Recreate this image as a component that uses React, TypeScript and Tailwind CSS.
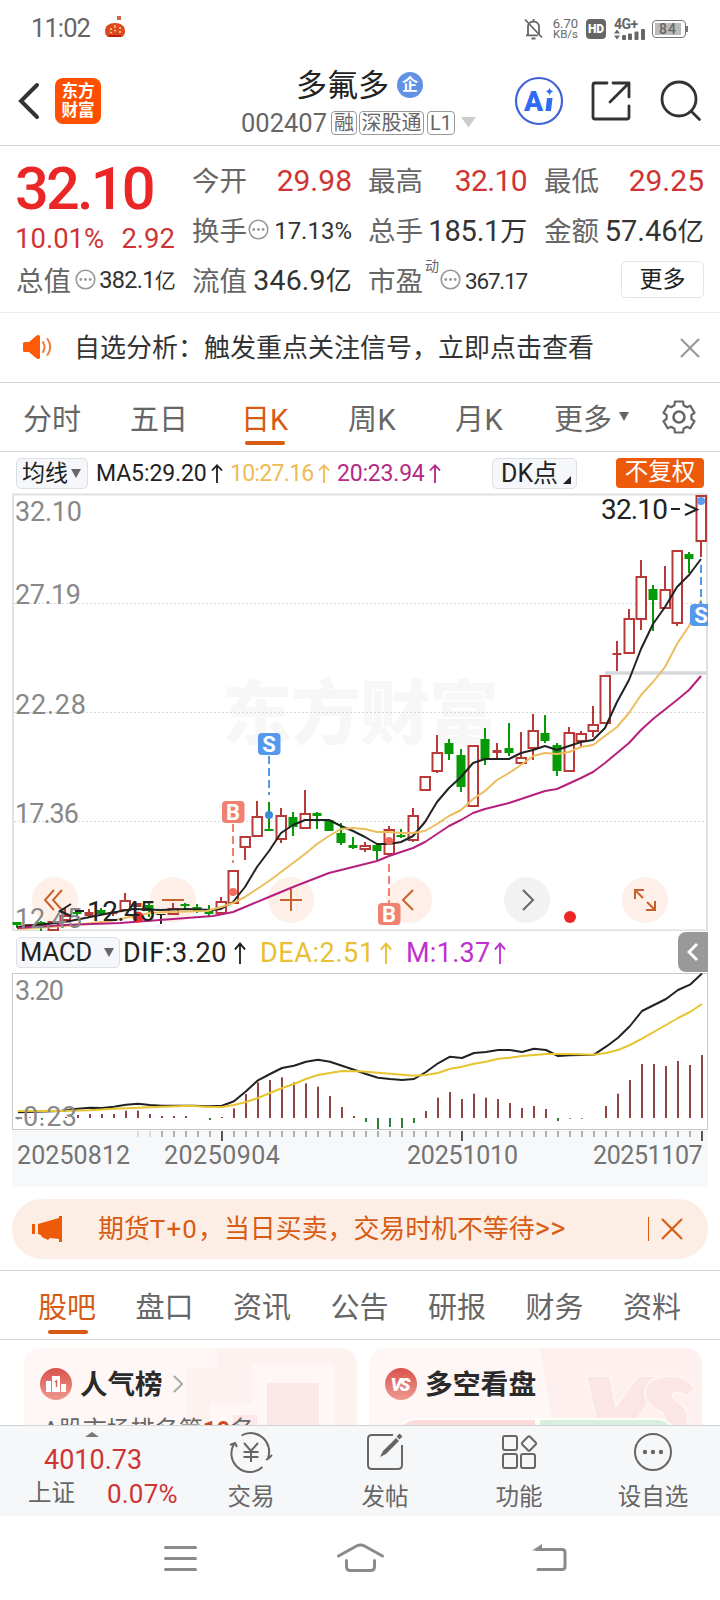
import React from 'react';
import clsx from 'clsx';

type Candle = {
  kind: 'up' | 'down' | 'flat';
  open: number;
  close: number;
  high: number;
  low: number;
};

// [kind, body top, body bottom, wick top, wick bottom]
const RAW_CANDLES: [string, number, number, number, number][] = [
  ['d', 922, 925, 922, 928], ['f', 924, 927, 924, 927], ['d', 922, 926, 921, 931], ['u', 921, 930, 921, 930],
  ['u', 915, 920, 908, 920], ['d', 912, 914, 909, 917], ['f', 912, 916, 909, 917], ['d', 910, 914, 908, 915],
  ['f', 912, 914, 909, 916], ['u', 900, 910, 893, 911], ['f', 903, 907, 903, 907], ['d', 905, 911, 903, 917],
  ['k', 914, 915, 914, 924], ['u', 908, 914, 903, 914], ['d', 904, 906, 903, 910], ['d', 907, 911, 904, 913],
  ['d', 910, 914, 905, 916], ['u', 901, 913, 897, 913], ['u', 870, 903, 870, 903], ['u', 836, 847, 836, 860],
  ['u', 816, 836, 801, 836], ['d', 829, 831, 802, 831], ['u', 815, 839, 808, 843], ['d', 817, 827, 812, 836],
  ['u', 813, 828, 790, 828], ['d', 813, 816, 812, 829], ['d', 820, 831, 820, 831], ['d', 833, 843, 823, 845],
  ['d', 845, 848, 837, 849], ['u', 845, 849, 842, 852], ['d', 845, 851, 843, 860], ['u', 829, 854, 826, 854],
  ['d', 835, 837, 829, 838], ['u', 815, 840, 808, 842], ['u', 776, 790, 776, 790], ['u', 752, 771, 735, 773],
  ['d', 743, 754, 739, 760], ['d', 755, 787, 749, 792], ['u', 745, 806, 745, 806], ['d', 739, 759, 728, 765],
  ['f', 750, 753, 743, 758], ['d', 748, 753, 723, 756], ['u', 757, 763, 732, 763], ['u', 730, 748, 714, 760],
  ['d', 733, 741, 715, 743], ['d', 745, 771, 743, 776], ['u', 732, 771, 727, 771], ['u', 733, 741, 731, 747],
  ['u', 724, 731, 706, 737], ['u', 675, 723, 675, 723], ['f', 653, 655, 641, 671], ['u', 618, 653, 609, 653],
  ['u', 576, 619, 560, 630], ['d', 589, 600, 585, 631], ['u', 589, 608, 566, 608], ['u', 550, 623, 550, 626],
  ['d', 554, 559, 552, 573], ['u', 495, 541, 495, 557],
];

const MACD_BARS = [
  -4, 2, -5, -2, 3, 9, 12, 12, 12, 22, 22, 12, 6, 6, 6, 0, -6, 3, 29, 72, 107, 114, 122, 107, 104, 94, 66, 33, 6,
  -12, -33, -27, -30, -15, 21, 61, 78, 57, 73, 61, 57, 45, 30, 36, 27, -9, -2, -2, 0, 36, 73, 114, 162, 162, 156,
  171, 159, 189,
];

const MA5 =
  '17,927 65,922 90,917 110,913 133,909 161,910 187,909 213,910 221,909 233,902 245,887 257,867 269,851 281,833 293,825 305,820 317,820 329,820 341,826 353,831 365,837 377,844 389,844 401,842 413,836 425,822 437,802 449,788 461,777 473,763 485,759 509,759 521,753 533,750 545,746 557,750 569,746 581,742 593,740 605,728 617,702 629,680 641,649 653,624 665,607 677,587 689,575 701,559';
const MA10 =
  '17,929 65,926 110,921 150,913 167,912 207,911 221,907 233,903 245,897 257,889 269,881 281,872 293,863 305,854 317,844 329,836 341,829 353,828 365,829 377,832 389,832 401,833 413,833 425,831 437,824 449,816 461,810 473,799 485,791 497,780 509,773 521,765 533,756 545,753 557,754 569,752 581,747 593,745 605,736 617,727 629,713 641,695 653,682 665,667 677,644 689,626 701,600';
const MA20 =
  '17,928 65,925 120,923 173,919 213,916 233,912 245,907 269,897 293,887 329,873 353,867 377,861 389,856 413,848 425,842 449,826 461,820 473,813 485,809 509,803 521,799 533,795 545,791 557,789 581,778 593,772 605,763 629,743 641,730 653,719 677,700 689,690 701,676';

const DIF =
  '18,1112.3 60,1111 75,1109 90,1107.7 102,1108 114,1106.7 126,1104.7 138,1103.7 150,1105 162,1105.7 193,1105.7 210,1106.3 222,1105.7 234,1101.3 246,1091.3 258,1080.3 270,1074 282,1068 294,1065.7 306,1061.7 318,1059.7 330,1061.7 342,1065.7 354,1069.7 366,1074 378,1077.7 390,1079 402,1080 414,1079 426,1072 438,1063.3 450,1056.7 462,1058 474,1053 486,1052 498,1050 510,1050 522,1052 534,1048.7 546,1050 558,1056 570,1055.3 594,1054.7 606,1046.7 618,1037.7 630,1026 642,1011 654,1005 666,999 678,990 690,984.7 702,973.5';
const DEA =
  '18,1111 60,1111 90,1110.3 114,1108.7 150,1107.3 190,1105.7 210,1107 222,1107 234,1105 246,1102 258,1098 270,1093 282,1088 294,1084 306,1079 318,1075 330,1073 342,1071 360,1071.3 390,1073.7 414,1075.7 426,1075 438,1073 450,1068.7 462,1066.7 474,1063.7 486,1061.7 498,1058.7 510,1057.7 522,1056 534,1055 546,1054 570,1054 594,1054.7 606,1053 618,1050 630,1045 642,1038.7 666,1025 678,1018 690,1012 702,1004';

const candles: Candle[] = RAW_CANDLES.map(([kind, open, close, high, low]) => ({
  kind: kind === 'u' ? 'up' : kind === 'd' ? 'down' : 'flat',
  open,
  close,
  high,
  low,
}));

const gearPath = (() => {
  const pts: string[] = [];
  for (let i = 0; i < 6; i++) {
    const a = -90 + i * 60;
    for (const [r, d] of [[12.6, -21], [16, -15], [16, 15], [12.6, 21]]) {
      const t = ((a + d) * Math.PI) / 180;
      pts.push(`${(17 + r * Math.cos(t)).toFixed(1)},${(17 + r * Math.sin(t)).toFixed(1)}`);
    }
  }
  return `M${pts.join('L')}Z`;
})();

function StatusBar() {
  return (
    <div className="flex h-[57px] shrink-0 items-center pl-[31px] pt-[1px] text-[#666]">
      <span className="w-[73px] text-[25.500px] leading-none tracking-[-0.900px]">11:02</span>
      <svg className="mb-1" width="22" height="22" viewBox="0 0 22 22">
        <rect x="13" y="0" width="4" height="4" fill="#c4674a" />
        <path d="M1 15c0-5 4-8 10-8s10 3 10 8c0 3-1 5-3 6H4c-2-1-3-3-3-6z" fill="#dd4a1c" />
        <path d="M5 19h12v2H5z" fill="#c11a10" />
        <path d="M6 13h2M11 9v3M15 12h2M6 16l2 1M10 14l2 1M15 16h2" stroke="#ffd9b0" strokeWidth="1.3" />
      </svg>
      <svg className="ml-[398px]" width="20" height="22" viewBox="0 0 20 22" fill="none" stroke="#666" strokeWidth="1.800">
        <path d="M4 17V9c0-3 2-5.500 5.500-5.500S15 6 15 9v8M2 17.300h12M9.500 1v2M7.500 20.500h4M1 1.500l17 18" />
      </svg>
      <div className="ml-[5px] mr-[4px] w-[33px] text-center text-[13px] leading-[11px]">
        <div>6.70</div>
        <div className="text-[11.500px]">KB/s</div>
      </div>
      <div className="flex h-5 w-5 items-center justify-center rounded bg-[#666] text-[12px] font-black leading-none text-white">HD</div>
      <div className="ml-[8px] w-[34px]">
        <div className="text-[14px] font-bold leading-[10px] tracking-[-0.500px]">4G+</div>
        <svg width="32" height="11" viewBox="0 0 32 11" fill="#666">
          <path d="M0 4.500l3-4 3 4zM0 6.500h6l-3 4z" />
          <rect x="8" y="6" width="4" height="5" rx="1" />
          <rect x="14" y="4.500" width="4" height="6.500" rx="1" />
          <rect x="20.500" y="2.500" width="4" height="8.500" rx="1" />
          <rect x="27" y="0" width="4" height="11" rx="1" />
        </svg>
      </div>
      <div className="ml-[4px] flex h-[18px] w-[34px] items-center rounded border-[1.500px] border-[#777] p-[2px]">
        <div className="flex h-full w-[26px] items-center justify-center bg-[#bbb] text-[14px] font-medium leading-none tracking-[1px]">84</div>
      </div>
      <div className="h-1.5 w-[2px] bg-[#777]" />
    </div>
  );
}

function Tag({ children, className }: { children: React.ReactNode; className?: string }) {
  return (
    <span className={clsx('flex h-[24px] items-center justify-center rounded-[4px] border border-[#999] text-[20px] leading-none', className)}>
      {children}
    </span>
  );
}

function Header() {
  return (
    <div className="flex h-[89px] shrink-0 items-center border-b border-[#d5d5d5] pl-[17px]">
      <svg width="24" height="38" viewBox="0 0 24 38" fill="none" stroke="#333" strokeWidth="4" strokeLinecap="round">
        <path d="M20 3L4 19l16 16" strokeLinejoin="miter" />
      </svg>
      <div className="ml-[14px] flex h-[46px] w-[46px] flex-col items-center justify-center rounded-[8px] bg-[#fe5000] text-[16.500px] font-bold leading-[19px] text-white">
        <span>东方</span>
        <span>财富</span>
      </div>
      <div className="ml-[140px] w-[260px]">
        <div className="flex h-[44px] items-center pl-[55px]">
          <span className="w-[101px] text-[31px] leading-[31px] text-[#222]">多氟多</span>
          <span className="flex h-[26px] w-[26px] items-center justify-center rounded-full bg-[#6290e4] text-[16px] font-bold leading-none text-white">企</span>
        </div>
        <div className="flex h-[32px] items-start pt-[4px] text-[#666]">
          <span className="w-[90px] text-[25.500px] leading-[25px]">002407</span>
          <Tag className="w-[26px]">融</Tag>
          <Tag className="ml-[2px] w-[65px]">深股通</Tag>
          <Tag className="ml-[3px] w-[28px]">L1</Tag>
          <svg className="ml-[6px] mt-[6px]" width="16" height="11">
            <path d="M0 0h15l-7.500 10.500z" fill="#ccc" />
          </svg>
        </div>
      </div>
      <div className="ml-[13px] flex items-center">
        <svg width="50" height="50" viewBox="514 76 50 50">
          <circle cx="539" cy="101" r="23" fill="none" stroke="#3f62d6" strokeWidth="2.200" />
          <text x="524" y="111" fill="#2f6bf3" fontSize="28" fontWeight="900" fontFamily="Roboto" textLength="20">A</text>
          <path d="M547 98h5.500l-1.500 13h-5.500zM549.500 88q.8 3 3.500 3.500-2.700.8-3.500 3.500-.8-2.700-3.500-3.500 2.700-.5 3.500-3.500z" fill="#2f6bf3" />
        </svg>
        <svg className="ml-[27px]" width="40" height="40" viewBox="591 81 40 40" fill="none" stroke="#333" strokeWidth="2.800" strokeLinecap="round" strokeLinejoin="round">
          <path d="M607 83h-12q-2 0-2 2v32q0 2 2 2h32q2 0 2-2v-11M613 83h16v14M628 84l-18 18" />
        </svg>
        <svg className="ml-[29px]" width="42" height="42" viewBox="660 80 42 42" fill="none" stroke="#333" strokeWidth="2.800" strokeLinecap="round">
          <circle cx="679" cy="99" r="17" />
          <path d="M691.500 111.500l8 8" />
        </svg>
      </div>
    </div>
  );
}

function More({ className }: { className?: string }) {
  return (
    <svg className={clsx('shrink-0', className)} width="21" height="21" viewBox="0 0 21 21">
      <circle cx="10.500" cy="10.500" r="9.300" fill="none" stroke="#999" strokeWidth="1.600" />
      <g fill="#999">
        <circle cx="5.800" cy="10.500" r="1.400" />
        <circle cx="10.500" cy="10.500" r="1.400" />
        <circle cx="15.200" cy="10.500" r="1.400" />
      </g>
    </svg>
  );
}

function Label({ children }: { children: React.ReactNode }) {
  return <span className="pt-[1px] text-[27.500px] leading-none text-[#666]">{children}</span>;
}

function Quote() {
  const row = 'flex h-[50px] items-center justify-between whitespace-nowrap leading-none';
  return (
    <div className="grid h-[167px] shrink-0 grid-cols-[176px_176px_176px_160px] border-b border-[#eee] pl-[16px] pt-[10px] text-[#333]">
      <div className="pr-[17px]">
        <div className="ml-[-1px] flex h-[66px] items-center pt-[2px] text-[59.500px] font-medium leading-none tracking-[-2.800px] text-[#ea2626]">32.10</div>
        <div className="ml-[-1px] flex h-[34px] items-center justify-between text-[27.500px] leading-none text-[#cf3434]">
          <span>10.01%</span>
          <span>2.92</span>
        </div>
        <div className={row}>
          <Label>总值</Label>
          <More className="mb-1" />
          <span className="text-[23.500px] tracking-[-0.700px]">382.1<span className="text-[21px]">亿</span></span>
        </div>
      </div>
      <div className="pr-[16px]">
        <div className={row}>
          <Label>今开</Label>
          <span className="text-[30px] text-[#cf3434]">29.98</span>
        </div>
        <div className={row}>
          <Label>换手</Label>
          <More className="mb-1 ml-[1px]" />
          <span className="ml-auto text-[24px]">17.13%</span>
        </div>
        <div className={row}>
          <Label>流值</Label>
          <span className="text-[28.500px] tracking-[0.200px]">346.9<span className="text-[26px]">亿</span></span>
        </div>
      </div>
      <div className="pr-[17px]">
        <div className={row}>
          <Label>最高</Label>
          <span className="text-[30px] tracking-[-0.600px] text-[#cf3434]">32.10</span>
        </div>
        <div className={row}>
          <Label>总手</Label>
          <span className="text-[29px] tracking-[-0.200px]">185.1<span className="text-[27px]">万</span></span>
        </div>
        <div className={row}>
          <Label>市盈</Label>
          <span className="mb-[30px] ml-[2px] text-[14px] text-[#666]">动</span>
          <More className="mb-1 ml-[1px]" />
          <span className="ml-auto text-[22.500px] tracking-[-1.200px]">367.17</span>
        </div>
      </div>
      <div>
        <div className={row}>
          <Label>最低</Label>
          <span className="text-[30px] text-[#cf3434]">29.25</span>
        </div>
        <div className={row}>
          <Label>金额</Label>
          <span className="text-[29px]">57.46<span className="text-[26.500px]">亿</span></span>
        </div>
        <div className="flex h-[46px] items-center justify-end">
          <span className="flex h-[37px] w-[83px] items-center justify-center rounded-[5px] border-[1.500px] border-[#e5e5e5] text-[23px] leading-none text-[#222]">更多</span>
        </div>
      </div>
    </div>
  );
}

function Notice() {
  return (
    <div className="flex h-[70px] shrink-0 items-center border-b border-[#d5d5d5] pl-[22px] text-[#333]">
      <svg className="mb-0.5" width="32" height="26" viewBox="0 0 32 26">
        <path d="M1 9.500Q1 8 2.500 8H7l7-6q1-1 2.500-1T18 2.500v21q0 1.500-1.500 1.500T14 24l-7-6H2.500Q1 18 1 16.500z" fill="#fe5a08" />
        <path d="M21 8q3 5 0 10M25.500 5q5.500 8 0 16" fill="none" stroke="#f17b3c" strokeWidth="2" strokeLinecap="round" />
      </svg>
      <span className="ml-[20px] whitespace-nowrap text-[26px] leading-none">自选分析：触发重点关注信号，立即点击查看</span>
      <svg className="ml-auto mr-[19px]" width="22" height="22" viewBox="0 0 22 22" stroke="#999" strokeWidth="2.200">
        <path d="M2 2l18 18M20 2L2 20" />
      </svg>
    </div>
  );
}

function PeriodTabs() {
  return (
    <div className="flex h-[69px] shrink-0 items-center border-b border-[#d5d5d5] pl-[23px] pt-[7px] text-[29px] leading-none text-[#666]">
      <span className="w-[107px]">分时</span>
      <span className="w-[111px]">五日</span>
      <span className="relative w-[107px] text-[#d65c14]">
        日K
        <i className="absolute left-[4px] top-[35px] h-[4px] w-[40px] rounded-full bg-[#d65a12]" />
      </span>
      <span className="w-[107px] tracking-[0.500px]">周K</span>
      <span className="w-[99px] tracking-[0.500px]">月K</span>
      <span>更多</span>
      <svg className="mb-2 ml-[7px]" width="10" height="9">
        <path d="M0 0h10L5 9z" fill="#666" />
      </svg>
      <svg className="mb-2 ml-[33px]" width="34" height="34" viewBox="0 0 34 34" fill="none" stroke="#666" strokeWidth="2.200" strokeLinejoin="round">
        <path d={gearPath} />
        <circle cx="17" cy="17" r="5.500" strokeWidth="2.600" />
      </svg>
    </div>
  );
}

function Arrow({ h = 19 }: { h?: number }) {
  return (
    <svg className="shrink-0" width="12" height={h} viewBox="0 0 13 22" fill="none" stroke="currentColor" strokeWidth="2" preserveAspectRatio="none">
      <path d="M6.500 1v21M1 7.500L6.500 1.500 12 7.500" />
    </svg>
  );
}

function AverageBar() {
  return (
    <div className="flex h-[41px] shrink-0 items-center whitespace-nowrap pl-[16px] pt-[1px] text-[23px] leading-none">
      <div className="flex h-[31px] w-[72px] items-center rounded-[5px] border border-[#dcdfe5] bg-[#f6f7fa] pl-[5px] text-[#222]">
        均线
        <svg className="ml-[3px]" width="10" height="9">
          <path d="M0 0h10L5 9z" fill="#666" />
        </svg>
      </div>
      <div className="ml-[8px] flex w-[134px] items-center justify-start pt-[1px] text-[#222]">
        <span className="w-[115px] tracking-[-0.100px]">MA5:29.20</span>
        <Arrow />
      </div>
      <div className="flex w-[107px] items-center pt-[1px] text-[#eebb55]">
        <span className="w-[88px] tracking-[-0.700px]">10:27.16</span>
        <Arrow />
      </div>
      <div className="flex w-[155px] items-center pt-[1px] text-[#b52a85]">
        <span className="w-[92px] tracking-[-0.200px]">20:23.94</span>
        <Arrow />
      </div>
      <div className="flex h-[31px] w-[85px] items-center rounded-[5px] border border-[#dcdfe5] bg-[#f6f7fa] pl-[8px] text-[25px] text-[#222]">
        DK点
        <svg className="ml-[5px] mt-[14px]" width="8" height="8">
          <path d="M8 0v8H0z" fill="#222" />
        </svg>
      </div>
      <div className="ml-[39px] flex h-[30px] w-[88px] items-center justify-center rounded-[4px] bg-[#ee5a0b] text-[23.500px] text-white">不复权</div>
    </div>
  );
}

function Marker({ x, y, kind, line }: { x: number; y: number; kind: 'B' | 'S'; line: [number, number] }) {
  const color = kind === 'B' ? '#f08070' : '#5599ee';
  return (
    <g>
      <path d={`M${x} ${line[0]}V${line[1]}`} stroke={color} strokeWidth="2" strokeDasharray="8 4" />
      <rect x={x - 11} y={y - 11} width="22.500" height="22" rx="4" fill={color} />
      <text x={x} y={y + 8} textAnchor="middle" fontSize="22" fontWeight="700" fill="#fff" fontFamily="Roboto">{kind}</text>
    </g>
  );
}

function RoundButton({ cx, muted, d }: { cx: number; muted?: boolean; d: string }) {
  return (
    <g>
      <circle cx={cx} cy="900" r="23" fill={muted ? '#f2f2f2' : '#fef0e9'} />
      <path d={d} transform={`translate(${cx} 900)`} fill="none" stroke={muted ? '#666' : '#c9622a'} strokeWidth="2" />
    </g>
  );
}

function PriceChart() {
  return (
    <svg className="ml-[12px] shrink-0" width="696" height="438" viewBox="12 493 696 438" fontFamily="Roboto, sans-serif">
      <path d="M13 931V494.500H707V930.500H12" fill="none" stroke="#e0e0e0" strokeWidth="2" />
      <text x="222" y="739" fontSize="70" fontWeight="900" fill="#f7f7f7" fontFamily="Noto Sans CJK SC" textLength="277">东方财富</text>
      <path d="M14 603.500H706M14 712.500H706M14 821.500H706" stroke="#d8d8d8" strokeDasharray="2 2" />
      <path d="M605 673H707" stroke="#d5d8db" strokeWidth="3.500" />
      <RoundButton cx={55} d="M-1-10L-10 0-1 10M7-10L-2 0 7 10" />
      <RoundButton cx={173} d="M-11 0H11" />
      <RoundButton cx={291} d="M-11 0H11M0-11V11" />
      <RoundButton cx={409} d="M4-10L-6 0 4 10" />
      <RoundButton cx={527} muted d="M-4-10L6 0-4 10" />
      <RoundButton cx={645} d="M-10-1V-10H-1M-10-10L-2-2M1 10H10V1M10 10L2 2" />
      {candles.map((c, i) => {
        const x = 17 + i * 12;
        const color = i === 12 ? '#222' : c.kind === 'down' ? '#069a06' : '#b83a38';
        return (
          <g key={i} stroke={color} strokeWidth="2">
            <path d={`M${x} ${c.high}V${c.open}M${x} ${c.close}V${c.low}`} />
            {c.kind === 'up' ? (
              <rect x={x - 4.5} y={c.open + 1} width="9.500" height={Math.max(c.close - c.open - 1, 2)} fill="#fff" />
            ) : (
              <rect x={x - 4.5} y={c.open} width="9" height={c.close - c.open} fill={color} stroke="none" />
            )}
          </g>
        );
      })}
      <g fill="none" strokeWidth="2" strokeLinejoin="round">
        <polyline points={MA5} stroke="#222" />
        <polyline points={MA10} stroke="#ecbd5c" />
        <polyline points={MA20} stroke="#b5207f" />
      </g>
      <circle cx="233" cy="892" r="4" fill="#f26a5a" />
      <circle cx="389" cy="841" r="4" fill="#f26a5a" />
      <circle cx="269" cy="815" r="4" fill="#3e8bd8" />
      <circle cx="701" cy="501" r="4" fill="#5b9df0" />
      <g fontSize="27" fill="#888">
        <text x="15" y="521" textLength="67">32.10</text>
        <text x="15" y="604" textLength="66">27.19</text>
        <text x="15" y="714" textLength="71">22.28</text>
        <text x="15" y="823" textLength="64">17.36</text>
        <text x="15" y="928" textLength="67">12.45</text>
      </g>
      <circle cx="138" cy="917" r="5.500" fill="#ee2a2a" />
      <path d="M71 904L60 911 71 916M75 911H84" fill="none" stroke="#222" strokeWidth="2" />
      <text x="87" y="920.500" fontSize="28" fill="#222" textLength="68">12.45</text>
      <circle cx="570" cy="917" r="6" fill="#ee2626" />
      <text x="601" y="519" fontSize="28" fill="#222" textLength="67">32.10</text>
      <path d="M671 509H680M685 504L697 509.500 685 515" fill="none" stroke="#222" strokeWidth="2" />
      <Marker x={233} y={812} kind="B" line={[824, 863]} />
      <Marker x={389} y={914} kind="B" line={[864, 903]} />
      <Marker x={269} y={744} kind="S" line={[756, 795]} />
      <Marker x={701} y={615} kind="S" line={[565, 604]} />
    </svg>
  );
}

function MacdBar() {
  return (
    <div className="flex h-[42px] shrink-0 items-center whitespace-nowrap pl-[16px] text-[27px] leading-none">
      <div className="flex h-[31px] w-[104px] items-center rounded-[5px] border border-[#dcdfe5] bg-[#f6f7fa] pl-[3px] text-[25.500px] text-[#222]">
        <span className="w-[84px] pt-[1px]">MACD</span>
        <svg width="10" height="9">
          <path d="M0 0h10L5 9z" fill="#666" />
        </svg>
      </div>
      <div className="ml-[3px] flex w-[137px] items-center pt-[2px] text-[#222]">
        <span className="w-[111px] tracking-[0.600px]">DIF:3.20</span>
        <Arrow h={22} />
      </div>
      <div className="flex w-[146px] items-center pt-[2px] text-[#e8c033]">
        <span className="w-[120px] tracking-[0.600px]">DEA:2.51</span>
        <Arrow h={22} />
      </div>
      <div className="flex items-center pt-[2px] text-[#bf30d0]">
        <span className="w-[88px] tracking-[0.300px]">M:1.37</span>
        <Arrow h={22} />
      </div>
      <div className="ml-auto mr-[12px] flex h-[40px] w-[30px] items-center justify-center rounded-l-[8px] bg-[#999]">
        <svg width="12" height="20" viewBox="0 0 12 20" fill="none" stroke="#fff" strokeWidth="3">
          <path d="M10 2L2 10l8 8" />
        </svg>
      </div>
    </div>
  );
}

function MacdChart() {
  return (
    <svg className="ml-[12px] shrink-0" width="696" height="157" viewBox="12 973 696 157">
      <rect x="12.500" y="973.500" width="695" height="156" fill="#fff" stroke="#c8c8c8" />
      {MACD_BARS.map((v, i) => (
        <rect
          key={i}
          x={17 + i * 12}
          y={v > 0 ? 1118 - v / 3 : 1118}
          width="2"
          height={Math.abs(v) / 3}
          fill={v > 0 ? '#8e4643' : '#2f8034'}
        />
      ))}
      <g fill="none" strokeWidth="2" strokeLinejoin="round">
        <polyline points={DIF} stroke="#222" />
        <polyline points={DEA} stroke="#e6c530" />
      </g>
      <g fontSize="27" fill="#888" fontFamily="Roboto, sans-serif">
        <text x="15" y="999.500" textLength="49">3.20</text>
        <text x="15" y="1126" textLength="62">-0.23</text>
      </g>
    </svg>
  );
}

function DateAxis() {
  return (
    <div className="ml-[12px] h-[57px] w-[696px] shrink-0 bg-[#f7f8fa]">
      <svg className="block" width="696" height="12" viewBox="12 1130 696 12">
        {Array.from({ length: 48 }, (_, n) => n + 10).map((i) => {
          const major = (i - 17) % 20 === 0;
          return (
            <rect
              key={i}
              x={17 + i * 12}
              y="1131"
              width="2"
              height={major ? 10 : 6}
              fill={major ? '#555' : i < 12 ? '#dcdcdc' : '#b0b0b0'}
            />
          );
        })}
      </svg>
      <div className="flex pl-[5px] pt-[1px] text-[25px] leading-[25px] text-[#737373]">
        <span className="w-[147px] tracking-[0.100px]">20250812</span>
        <span className="w-[243px] tracking-[0.500px]">20250904</span>
        <span className="w-[186px] tracking-[-0.200px]">20251010</span>
        <span className="tracking-[-0.400px]">20251107</span>
      </div>
    </div>
  );
}

function Banner() {
  return (
    <div className="ml-[12px] mt-[12px] flex h-[60px] w-[696px] shrink-0 items-center rounded-full bg-[#fdeee5] pl-[20px] text-[#d85c14]">
      <svg width="31" height="28" viewBox="0 0 31 28" fill="#ee5a08">
        <path d="M0 9h3v10H0zM6 9l21-6V1h3v26h-3v-3l-9-1-2 2-6-3-1-2-3-1z" />
      </svg>
      <span className="ml-[35px] whitespace-nowrap pt-[2px] text-[25.900px] leading-none">
        期货<span className="tracking-[1.200px]">T+0</span>，当日买卖，交易时机不等待<span className="text-[29px] leading-[20px] tracking-[0.500px]">&gt;&gt;</span>
      </span>
      <div className="ml-auto h-6 w-px bg-[#d85c14]" />
      <svg className="ml-[12px] mr-[25px]" width="22" height="22" viewBox="0 0 22 22" stroke="currentColor" strokeWidth="2.200">
        <path d="M1 1l20 20M21 1L1 21" />
      </svg>
    </div>
  );
}

const SECTIONS = ['股吧', '盘口', '资讯', '公告', '研报', '财务', '资料'];

function SectionTabs() {
  return (
    <div className="mt-[11px] flex h-[70px] shrink-0 items-center gap-[39.500px] border-y border-[#d5d5d5] pl-[38px] pt-[6px] text-[29px] leading-none text-[#666]">
      {SECTIONS.map((name, i) => (
        <span key={name} className={clsx('relative w-[58px] whitespace-nowrap', i === 0 && 'text-[#d65c14]')}>
          {name}
          {i === 0 && <i className="absolute left-[10px] top-[36px] h-[4px] w-[40px] rounded-full bg-[#d65a12]" />}
        </span>
      ))}
    </div>
  );
}

function Cards() {
  return (
    <div className="flex h-[85px] shrink-0 gap-[12px] overflow-hidden pl-[24px] pt-[8px]">
      <div className="relative h-[160px] w-[333px] shrink-0 overflow-hidden rounded-[16px] bg-[#fef7f5]">
        <svg className="absolute inset-0" width="333" height="78">
          <path d="M193 0H333V78H163V20H193z" fill="#fdf2f0" />
          <path d="M228 16H310V78H186V55H228z" fill="#fef7f5" />
          <path d="M243 35H295V78H243zM209 67H233V78H209z" fill="#fbe8e7" />
        </svg>
        <div className="relative flex items-center pl-[16px] pt-[20px]">
          <svg width="32" height="32" viewBox="0 0 32 32">
            <defs>
              <linearGradient id="badge" x2="0" y2="1">
                <stop stopColor="#d9534c" />
                <stop offset="1" stopColor="#ee9990" />
              </linearGradient>
            </defs>
            <circle cx="16" cy="16" r="16" fill="url(#badge)" />
            <path d="M6 13h5v11H6zM12 8h8v16h-8zM21 16h5v8h-5z" fill="#fff" />
            <path d="M15 14l1.500-1v6" stroke="#dc6058" strokeWidth="1.500" fill="none" />
          </svg>
          <span className="ml-[8px] pt-[2px] text-[27.500px] font-bold leading-none text-[#2a2a2a]">人气榜</span>
          <svg className="ml-[10px]" width="10" height="18" viewBox="0 0 10 18" fill="none" stroke="#aaa" strokeWidth="2">
            <path d="M1 1l8 8-8 8" />
          </svg>
        </div>
        <div className="relative whitespace-nowrap pl-[19px] pt-[18px] text-[24px] leading-none text-[#666]">
          A股市场排名第<b className="text-[#cc4a24]">19</b>名
        </div>
      </div>
      <div className="relative h-[160px] w-[333px] shrink-0 overflow-hidden rounded-[16px] bg-[#fef7f5]">
        <svg className="absolute inset-0" width="333" height="78">
          <path d="M171 0H333V78H184z" fill="#fdf0ef" />
          <path d="M217 28h24l6 30 22-30h30l-36 50h-34z" fill="#fbe6e5" stroke="#fef5f3" strokeWidth="2" />
          <path d="M326 42q-8-14-24-14-26 0-26 18 0 10 16 18 6 4 4 14h22q4-14-6-22-10-6-8-10 6-4 12 2z" fill="#fbe6e5" stroke="#fef5f3" strokeWidth="2" />
          <rect x="29" y="70" width="277" height="40" rx="18" fill="#fffdfc" />
          <path d="M166 72H49q-14 0-18 12H166z" fill="#fbdcd9" />
          <path d="M171 72H286q14 0 18 12H171z" fill="#d8eedf" />
        </svg>
        <div className="relative flex items-center pl-[16px] pt-[20px]">
          <svg width="32" height="32" viewBox="0 0 32 32">
            <circle cx="16" cy="16" r="16" fill="url(#badge)" />
            <text x="15.500" y="22.500" textAnchor="middle" fontSize="18" fontWeight="900" fontStyle="italic" fontFamily="Roboto, sans-serif" fill="#fff" textLength="20">VS</text>
          </svg>
          <span className="ml-[8px] pt-[2px] text-[27.800px] font-bold leading-none text-[#2a2a2a]">多空看盘</span>
        </div>
      </div>
    </div>
  );
}

function Action({ name, children }: { name: string; children: React.ReactNode }) {
  return (
    <div className="flex w-[134px] flex-col items-center pt-[5px]">
      <svg width="44" height="42" viewBox="0 0 44 42" fill="none" stroke="#666" strokeWidth="2">
        {children}
      </svg>
      <span className="mt-[13px] text-[23.500px] leading-none text-[#666]">{name}</span>
    </div>
  );
}

function BottomBar() {
  return (
    <div className="flex h-[91px] shrink-0 border-t border-[#d0d3d6] bg-[#f6f7f9]">
      <div className="w-[184px] leading-none">
        <svg className="ml-[85px] mt-[6px] block" width="14" height="5">
          <path d="M0 5L7 0l7 5z" fill="#777" />
        </svg>
        <div className="mt-[10px] pl-[44px] text-[27px] text-[#cf3434]">4010.73</div>
        <div className="mt-[7px] flex items-center pl-[28px]">
          <span className="w-[79px] text-[23.500px] text-[#666]">上证</span>
          <span className="text-[26px] tracking-[0.200px] text-[#cf3434]">0.07%</span>
        </div>
      </div>
      <Action name="交易">
        <path d="M12.500 4.500A18.500 18.500 0 0 1 39 27M33.500 36A18.500 18.500 0 0 1 5 13M1 14l5-2 2 4M37 29l3-2 3-3" />
        <path d="M15 12l7 8 7-8M14.500 21h15M14.500 26h15M22 20v11" />
      </Action>
      <Action name="发帖">
        <path d="M30 4H9q-4 0-4 4v26q0 4 4 4h26q4 0 4-4V14" />
        <path d="M17 26l3-6L33 7l3 3-13 13z" fill="#666" stroke="none" />
        <path d="M35 7l3-3" strokeWidth="4" />
      </Action>
      <Action name="功能">
        <rect x="6" y="5" width="14" height="14" rx="2" />
        <rect x="6" y="23" width="14" height="14" rx="2" />
        <rect x="24" y="23" width="14" height="14" rx="2" />
        <rect x="26.500" y="7" width="11" height="11" rx="1.500" transform="rotate(45 32 12.500)" />
      </Action>
      <Action name="设自选">
        <circle cx="22" cy="21" r="18" />
        <g fill="#666" stroke="none">
          <circle cx="14" cy="21" r="2.200" />
          <circle cx="22" cy="21" r="2.200" />
          <circle cx="30" cy="21" r="2.200" />
        </g>
      </Action>
    </div>
  );
}

function SystemNav() {
  return (
    <div className="flex h-[84px] shrink-0 items-center pl-[162px]">
      <svg width="410" height="34" viewBox="162 1541 410 34" fill="none" stroke="#8a8a8a" strokeWidth="3" strokeLinecap="round">
        <path d="M165.500 1547.500h30M165.500 1558.500h30M165.500 1569.500h30" />
        <path d="M338.500 1556l18-10q4-2 8 0l18 10M346.500 1560.500v6q0 4 4 4h20q4 0 4-4v-6" />
        <path d="M537 1549.500h25q3 0 3 3v14q0 3-3 3h-24" />
        <path d="M532 1550.500l10-6.500v6.500z" fill="#8a8a8a" stroke="none" />
      </svg>
    </div>
  );
}

export default function App() {
  return (
    <div className="flex h-[1600px] w-[720px] flex-col overflow-hidden bg-white font-[Roboto,'Noto_Sans_CJK_SC',sans-serif]">
      <StatusBar />
      <Header />
      <Quote />
      <Notice />
      <PeriodTabs />
      <AverageBar />
      <PriceChart />
      <MacdBar />
      <MacdChart />
      <DateAxis />
      <Banner />
      <SectionTabs />
      <Cards />
      <BottomBar />
      <SystemNav />
    </div>
  );
}
